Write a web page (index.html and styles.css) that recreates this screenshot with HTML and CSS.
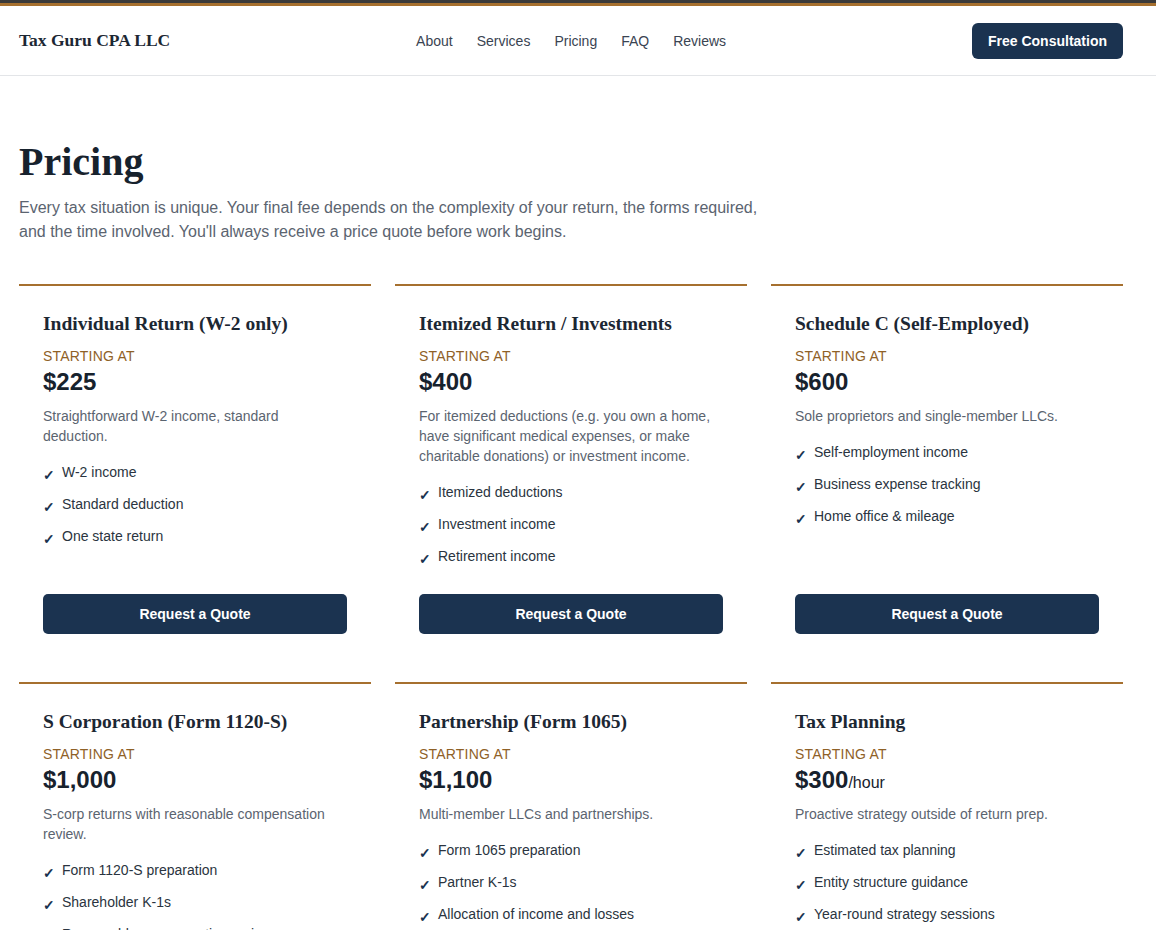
FILE: index.html
```html
<!DOCTYPE html>
<html lang="en">
<head>
  <meta charset="UTF-8">
  <meta name="viewport" content="width=device-width, initial-scale=1.0">
  <title>Pricing | Tax Guru CPA LLC</title>
  <link rel="stylesheet" href="styles.css">
</head>
<body>
  <div class="topbar"></div>

  <header class="site-header">
    <div class="wrap header-inner">
      <a class="logo" href="#">Tax Guru CPA LLC</a>
      <nav class="nav">
        <a href="#">About</a>
        <a href="#">Services</a>
        <a href="#">Pricing</a>
        <a href="#">FAQ</a>
        <a href="#">Reviews</a>
      </nav>
      <a class="btn btn-small" href="#">Free Consultation</a>
    </div>
  </header>

  <main class="wrap">
    <section class="intro">
      <h1>Pricing</h1>
      <p>Every tax situation is unique. Your final fee depends on the complexity of your return, the forms required, and the time involved. You'll always receive a price quote before work begins.</p>
    </section>

    <section class="plans">
      <div class="plan">
        <h3>Individual Return (W-2 only)</h3>
        <div class="label">Starting at</div>
        <div class="price">$225</div>
        <p class="desc">Straightforward W-2 income, standard deduction.</p>
        <ul class="features">
          <li>W-2 income</li>
          <li>Standard deduction</li>
          <li>One state return</li>
        </ul>
        <a class="btn btn-block" href="#">Request a Quote</a>
      </div>

      <div class="plan">
        <h3>Itemized Return / Investments</h3>
        <div class="label">Starting at</div>
        <div class="price">$400</div>
        <p class="desc">For itemized deductions (e.g. you own a home, have significant medical expenses, or make charitable donations) or investment income.</p>
        <ul class="features">
          <li>Itemized deductions</li>
          <li>Investment income</li>
          <li>Retirement income</li>
        </ul>
        <a class="btn btn-block" href="#">Request a Quote</a>
      </div>

      <div class="plan">
        <h3>Schedule C (Self-Employed)</h3>
        <div class="label">Starting at</div>
        <div class="price">$600</div>
        <p class="desc">Sole proprietors and single-member LLCs.</p>
        <ul class="features">
          <li>Self-employment income</li>
          <li>Business expense tracking</li>
          <li>Home office &amp; mileage</li>
        </ul>
        <a class="btn btn-block" href="#">Request a Quote</a>
      </div>

      <div class="plan">
        <h3>S Corporation (Form 1120-S)</h3>
        <div class="label">Starting at</div>
        <div class="price">$1,000</div>
        <p class="desc">S-corp returns with reasonable compensation review.</p>
        <ul class="features">
          <li>Form 1120-S preparation</li>
          <li>Shareholder K-1s</li>
          <li>Reasonable compensation review</li>
        </ul>
        <a class="btn btn-block" href="#">Request a Quote</a>
      </div>

      <div class="plan">
        <h3>Partnership (Form 1065)</h3>
        <div class="label">Starting at</div>
        <div class="price">$1,100</div>
        <p class="desc">Multi-member LLCs and partnerships.</p>
        <ul class="features">
          <li>Form 1065 preparation</li>
          <li>Partner K-1s</li>
          <li>Allocation of income and losses</li>
        </ul>
        <a class="btn btn-block" href="#">Request a Quote</a>
      </div>

      <div class="plan">
        <h3>Tax Planning</h3>
        <div class="label">Starting at</div>
        <div class="price">$300<span class="unit">/hour</span></div>
        <p class="desc">Proactive strategy outside of return prep.</p>
        <ul class="features">
          <li>Estimated tax planning</li>
          <li>Entity structure guidance</li>
          <li>Year-round strategy sessions</li>
        </ul>
        <a class="btn btn-block" href="#">Book a Session</a>
      </div>
    </section>
  </main>
</body>
</html>
```

FILE: styles.css
```css
* {
  box-sizing: border-box;
}
body {
  margin: 0;
  font-family: 'Liberation Sans', Arial, sans-serif;
  color: #1c2733;
  background: #fff;
}
a {
  text-decoration: none;
  color: inherit;
}
.topbar {
  height: 6px;
  border-top: 3px solid #3a3a3a;
  background: #a6702f;
}
.wrap {
  width: 1104px;
  margin-left: 19px;
}

/* header */
.site-header {
  border-bottom: 1px solid #e3e5e8;
}
.header-inner {
  height: 69px;
  display: flex;
  align-items: center;
  justify-content: space-between;
}
.logo {
  font-family: 'Liberation Serif', 'Times New Roman', serif;
  font-weight: bold;
  font-size: 17.5px;
  color: #1c2733;
}
.nav {
  display: flex;
  gap: 24px;
  font-size: 14px;
  color: #3a4452;
}
.btn {
  display: inline-block;
  background: #1b3350;
  color: #fff;
  font-weight: bold;
  font-size: 14px;
  text-align: center;
  border-radius: 5px;
}
.btn-small {
  padding: 10px 16px;
  border-radius: 6px;
}

/* intro */
.intro {
  padding-top: 62px;
  padding-bottom: 40px;
}
.intro h1 {
  font-family: 'Liberation Serif', 'Times New Roman', serif;
  font-size: 40px;
  font-weight: bold;
  margin: 0 0 11px;
  color: #17222d;
}
.intro p {
  margin: 0;
  max-width: 750px;
  font-size: 16px;
  line-height: 24px;
  color: #5b6470;
}

/* pricing cards */
.plans {
  display: grid;
  grid-template-columns: repeat(3, 1fr);
  gap: 24px;
}
.plan {
  border-top: 2px solid #a6702f;
  padding: 24px;
  display: flex;
  flex-direction: column;
}
.plan h3 {
  font-family: 'Liberation Serif', 'Times New Roman', serif;
  font-size: 19.5px;
  font-weight: bold;
  margin: 3px 0 13px;
  color: #1c2733;
}
.label {
  text-transform: uppercase;
  font-size: 14px;
  color: #8f6127;
  letter-spacing: 0.2px;
}
.price {
  font-size: 24px;
  font-weight: bold;
  margin-top: 4px;
  color: #17222d;
}
.price .unit {
  font-size: 16px;
  font-weight: normal;
}
.desc {
  margin: 10px 0 10px;
  max-width: 296px;
  font-size: 14px;
  line-height: 20px;
  color: #5b6470;
}
.features {
  list-style: none;
  margin: 0 0 22px;
  padding: 0;
}
.features li {
  font-size: 14px;
  line-height: 20px;
  padding: 6px 0 6px 19px;
  position: relative;
  color: #2a3440;
}
.features li::before {
  content: "\2713";
  position: absolute;
  left: 0;
  top: 9px;
  font-size: 14px;
  font-weight: bold;
  color: #1b3350;
}
.btn-block {
  margin-top: auto;
  padding: 12px 0;
  display: block;
}
```
